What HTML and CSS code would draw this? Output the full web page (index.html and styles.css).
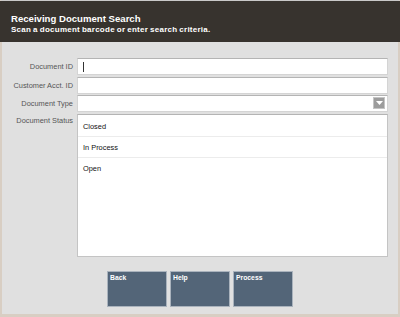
FILE: index.html
```html
<!DOCTYPE html>
<html>
<head>
  <meta charset="utf-8">
  <title>Receiving Document Search</title>
  <link rel="stylesheet" href="styles.css">
</head>
<body>
  <div class="frame">
    <div class="header">
      <div class="title">Receiving Document Search</div>
      <div class="subtitle">Scan a document barcode or enter search criteria.</div>
    </div>

    <div class="form">
      <div class="row">
        <label class="label">Document ID</label>
        <div class="field"><span class="caret"></span></div>
      </div>
      <div class="row">
        <label class="label">Customer Acct. ID</label>
        <div class="field"></div>
      </div>
      <div class="row">
        <label class="label">Document Type</label>
        <div class="field select">
          <span class="arrow">
            <svg width="7" height="4" viewBox="0 0 7 4"><polygon points="0,0 7,0 3.5,4" fill="#fff"/></svg>
          </span>
        </div>
      </div>
      <div class="row list-row">
        <label class="label">Document Status</label>
        <ul class="list">
          <li>Closed</li>
          <li>In Process</li>
          <li>Open</li>
        </ul>
      </div>
    </div>

    <div class="buttons">
      <button class="btn">Back</button>
      <button class="btn">Help</button>
      <button class="btn">Process</button>
    </div>
  </div>
</body>
</html>
```

FILE: styles.css
```css
body {
  margin: 0;
  padding: 0;
  font-family: "Liberation Sans", Arial, sans-serif;
}

.frame {
  width: 400px;
  height: 317px;
  box-sizing: border-box;
  background: #e0e0e0;
  border-top: 1px solid #c9c9c9;
  border-left: 2px solid #d8cec3;
  border-right: 2px solid #d8cec3;
  border-bottom: 3px solid #d8cec3;
  display: flex;
  flex-direction: column;
}

.header {
  height: 41px;
  background: #37332e;
  color: #fff;
  padding: 12px 0 0 11px;
  box-sizing: border-box;
  margin-left: -2px;
  margin-right: -2px;
}

.title {
  font-size: 9.6px;
  font-weight: bold;
  line-height: 11px;
}

.subtitle {
  font-size: 8px;
  font-weight: bold;
  line-height: 11px;
  letter-spacing: 0.25px;
  word-spacing: -0.5px;
}

.form {
  margin-top: 16px;
  display: flex;
  flex-direction: column;
  gap: 1.5px;
}

.row {
  display: flex;
  align-items: center;
}

.label {
  width: 71px;
  text-align: right;
  font-size: 7.4px;
  color: #555;
  padding-right: 4px;
}

.field {
  width: 311px;
  height: 17px;
  box-sizing: border-box;
  background: #fff;
  border: 1px solid #d4d4d4;
  border-top-color: #b4b4b4;
  position: relative;
}

.caret {
  position: absolute;
  left: 5px;
  top: 3px;
  width: 1px;
  height: 10px;
  background: #333;
}

.arrow {
  position: absolute;
  right: 2px;
  top: 1px;
  width: 12px;
  height: 12px;
  background: #9c9c9c;
  border: 1px solid #c4c4c4;
  box-sizing: border-box;
  display: flex;
  align-items: center;
  justify-content: center;
}

.list-row {
  align-items: flex-start;
}

.list-row .label {
  padding-top: 2px;
}

.list {
  list-style: none;
  margin: 0;
  padding: 0;
  width: 311px;
  height: 143px;
  box-sizing: border-box;
  background: #fff;
  border: 1px solid #c4c4c4;
  border-top-color: #b4b4b4;
}

.list li {
  height: 20px;
  line-height: 22px;
  padding-left: 5px;
  font-size: 7.4px;
  color: #111;
  border-bottom: 1px solid #ececec;
}

.list li:first-child {
  height: 21px;
  line-height: 23px;
}

.list li:last-child {
  border-bottom: none;
}

.buttons {
  margin-top: 14px;
  display: flex;
  justify-content: center;
  gap: 3px;
}

.btn {
  width: 60px;
  height: 36px;
  box-sizing: border-box;
  background: #536578;
  border: 1px solid #aab3bd;
  color: #fff;
  font-family: "Liberation Sans", Arial, sans-serif;
  font-size: 6.8px;
  font-weight: bold;
  text-align: left;
  padding: 2px 2px 0;
  display: flex;
  align-items: flex-start;
  margin: 0;
}
```
